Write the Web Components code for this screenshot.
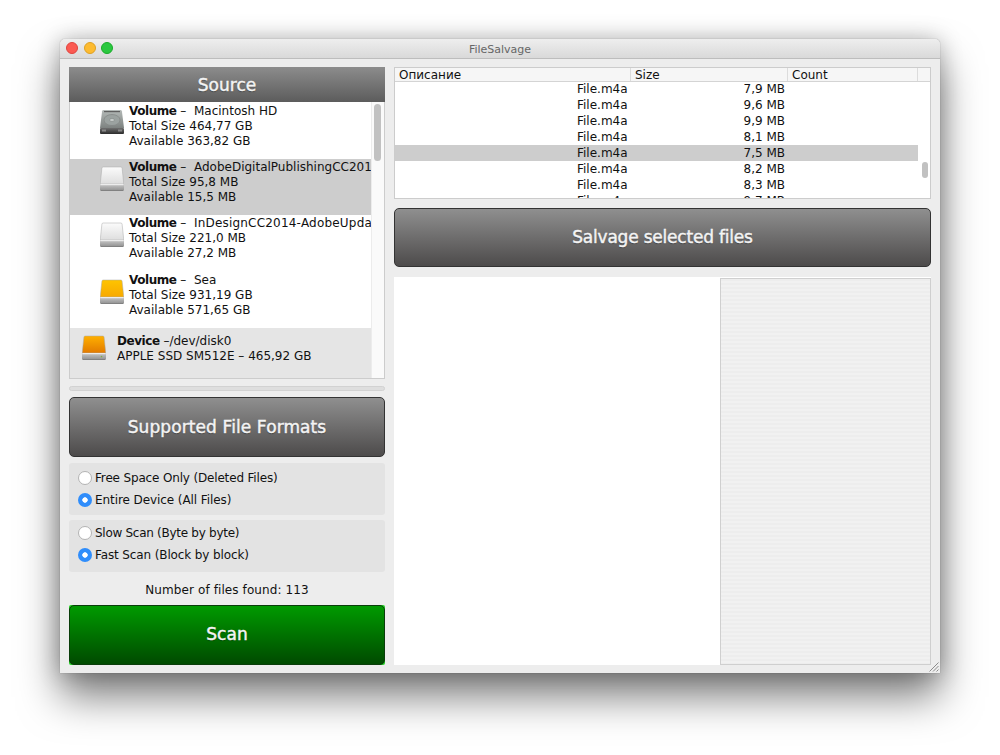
<!DOCTYPE html>
<html>
<head>
<meta charset="utf-8">
<title>FileSalvage</title>
<style>
  html, body { margin: 0; padding: 0; background: #ffffff; }
  body { font-family: "DejaVu Sans", "Liberation Sans", sans-serif; font-size: 12px; color: #111; }
  .stage { width: 1000px; height: 755px; box-sizing: border-box; padding: 39px 60px 0; overflow: hidden; }
  .left { display: flex; flex-direction: column; min-width: 0; }
  .right { display: flex; flex-direction: column; min-width: 0; }
  .found { height: 33px; box-sizing: border-box; padding-top: 3px; display: flex; align-items: center; justify-content: center; font-size: 12px; letter-spacing: 0.1px; }
</style>
</head>
<body>
<div class="stage">
  <fs-window title="FileSalvage">
    <div class="left">
      <fs-button variant="header">Source</fs-button>
      <fs-source-list>
        <fs-volume drive="internal" style="--text-top:1px" name="Macintosh HD" total="464,77 GB" free="363,82 GB"></fs-volume>
        <fs-volume drive="external" selected name="AdobeDigitalPublishingCC2014" total="95,8 MB" free="15,5 MB"></fs-volume>
        <fs-volume drive="external" style="--name-spacing:0.2px" name="InDesignCC2014-AdobeUpdate" total="221,0 MB" free="27,2 MB"></fs-volume>
        <fs-volume drive="amber" name="Sea" total="931,19 GB" free="571,65 GB"></fs-volume>
        <fs-device path="/dev/disk0" model="APPLE SSD SM512E" size="465,92 GB"></fs-device>
      </fs-source-list>
      <fs-splitter></fs-splitter>
      <fs-button style="height:59.5px;letter-spacing:0.1px">Supported File Formats</fs-button>
      <fs-radio-group style="margin-top:6.5px;padding-top:4px">
        <fs-radio style="letter-spacing:-0.16px">Free Space Only (Deleted Files)</fs-radio>
        <fs-radio checked style="letter-spacing:-0.08px">Entire Device (All Files)</fs-radio>
      </fs-radio-group>
      <fs-radio-group style="margin-top:5px;padding-top:2px">
        <fs-radio style="letter-spacing:-0.28px">Slow Scan (Byte by byte)</fs-radio>
        <fs-radio checked style="letter-spacing:-0.12px">Fast Scan (Block by block)</fs-radio>
      </fs-radio-group>
      <div class="found">Number of files found: 113</div>
      <fs-button variant="green" lift>Scan</fs-button>
    </div>
    <div class="right">
      <fs-file-table></fs-file-table>
      <fs-button lift style="margin-top:9px;height:59px;letter-spacing:-0.2px">Salvage selected files</fs-button>
      <fs-preview></fs-preview>
    </div>
  </fs-window>
</div>

<script>
// Window frame: title bar, two columns, resize grip
class FsWindow extends HTMLElement {
  constructor() {
    super();
    this.attachShadow({ mode: "open" });
  }
  connectedCallback() {
    this.shadowRoot.innerHTML = `
      <style>
        :host {
          display: flex;
          flex-direction: column;
          position: relative;
          width: 880px;
          height: 634px;
          background: #ededed;
          border-radius: 5px 5px 0 0;
          box-shadow: 0 24px 40px rgba(0, 0, 0, 0.5), 0 0 22px rgba(0, 0, 0, 0.25), 0 0 1px rgba(0, 0, 0, 0.45);
        }
        .bar {
          height: 20px;
          flex: none;
          box-sizing: border-box;
          padding-top: 2px;
          display: flex;
          align-items: center;
          justify-content: center;
          position: relative;
          border-bottom: 1px solid #bdbdbd;
          border-radius: 5px 5px 0 0;
          background: linear-gradient(#eeeeee, #d9d9d9);
          color: #666;
          font-size: 11px;
        }
        .lights { position: absolute; left: 6px; top: 3px; display: flex; gap: 5.5px; }
        .lights i { width: 12px; height: 12px; border-radius: 50%; display: block; box-sizing: border-box; }
        .r { background: #fb5a52; border: 1px solid #e0443e; }
        .y { background: #fdbb30; border: 1px solid #dea123; }
        .g { background: #2bc840; border: 1px solid #1aab29; }
        .body {
          flex: 1;
          display: grid;
          grid-template-columns: 316px 537px;
          gap: 9px;
          padding: 8px 9px 8px;
          min-height: 0;
        }
        .grip { position: absolute; right: 1px; bottom: 1px; }
      </style>
      <div class="bar">
        <div class="lights"><i class="r"></i><i class="y"></i><i class="g"></i></div>
        <span>${this.getAttribute("title")}</span>
      </div>
      <div class="body"><slot></slot></div>
      <svg class="grip" width="10" height="10" viewBox="0 0 10 10" fill="none" stroke="#8c8c8c" stroke-width="1">
        <path d="M0.5 9.5 9.5 0.5M4 9.5 9.5 4M7.5 9.5 9.5 7.5"/>
      </svg>
    `;
  }
}

// Gradient buttons: default grey, "header" (Source), "green" (Scan)
class FsButton extends HTMLElement {
  constructor() {
    super();
    this.attachShadow({ mode: "open" });
  }
  connectedCallback() {
    this.shadowRoot.innerHTML = `
      <style>
        :host {
          display: block;
          flex: none;
          height: 60px;
          color: #f4f4f4;
          font-size: 17px;
          text-shadow: 0 1px 1px rgba(0, 0, 0, 0.35);
          -webkit-text-stroke: 0.45px #f4f4f4;
        }
        .face {
          display: flex;
          align-items: center;
          justify-content: center;
          box-sizing: border-box;
          height: 100%;
          border: 1px solid #333;
          border-radius: 5px;
          background: linear-gradient(#8f8f8f, #4d4b4b);
        }
        :host([lift]) .face { padding-bottom: 2px; }
        :host([variant="header"]) { height: 35px; }
        :host([variant="header"]) .face {
          border: 0;
          border-radius: 0;
          background: linear-gradient(#8c8c8c, #5c5c5c);
        }
        :host([variant="green"]) { background: #25d025; border-radius: 2px; }
        :host([variant="green"]) .face {
          border-color: #0a3d0a;
          background: linear-gradient(#009a00, #004a00);
        }
      </style>
      <div class="face"><slot></slot></div>
    `;
  }
}

// Drive icons, drawn per kind
class FsDriveIcon extends HTMLElement {
  constructor() {
    super();
    this.attachShadow({ mode: "open" });
  }
  connectedCallback() {
    const kind = this.getAttribute("kind") || "external";
    const faces = {
      external: ["#fbfbfb", "#dedede"],
      amber: ["#ffc400", "#f7a900"],
      device: ["#ffb000", "#e27a00"],
    };
    let art;
    if (kind === "internal") {
      art = `
        <defs>
          <linearGradient id="top" x1="0" y1="0" x2="0" y2="1"><stop offset="0" stop-color="#b4bab8"/><stop offset="1" stop-color="#7d8280"/></linearGradient>
          <linearGradient id="front" x1="0" y1="0" x2="0" y2="1"><stop offset="0" stop-color="#6e6e6e"/><stop offset="1" stop-color="#2c2c2c"/></linearGradient>
        </defs>
        <path d="M3.5 1h17q1.2 0 1.4 1.2L24 19H0L2.1 2.2Q2.3 1 3.5 1z" fill="url(#top)"/>
        <rect x="4" y="2" width="16" height="1.2" fill="#5f5f5f"/>
        <ellipse cx="12" cy="11" rx="8" ry="5.5" fill="#9ba2a0" stroke="#7d8280" stroke-width=".6"/>
        <ellipse cx="12" cy="11" rx="2.4" ry="1.6" fill="#c4c9c7" stroke="#7d8280" stroke-width=".5"/>
        <rect x="0" y="19" width="24" height="6" rx="1" fill="url(#front)"/>
        <rect x="2" y="20.5" width="4" height="2" fill="#888"/>
        <rect x="18" y="20.5" width="4" height="2" fill="#888"/>
      `;
    } else {
      const f = faces[kind] || faces.external;
      art = `
        <defs>
          <linearGradient id="top" x1="0" y1="0" x2="0" y2="1"><stop offset="0" stop-color="${f[0]}"/><stop offset="1" stop-color="${f[1]}"/></linearGradient>
          <linearGradient id="base" x1="0" y1="0" x2="0" y2="1"><stop offset="0" stop-color="#c9c9c9"/><stop offset="1" stop-color="#8e8e8e"/></linearGradient>
        </defs>
        <path d="M3.2 1h17.6q1.2 0 1.3 1.2L23.8 18H.2L1.9 2.2Q2 1 3.2 1z" fill="url(#top)" stroke="#a8a8a8" stroke-width=".5"/>
        <rect x="0" y="18" width="24" height="7" rx="1.2" fill="url(#base)"/>
        <rect x="0.5" y="18" width="23" height="1.2" fill="#ececec"/>
        <rect x="1" y="24" width="22" height=".8" fill="#7d7d7d"/>
        ${kind === "device" ? '<circle cx="19.5" cy="21.6" r=".8" fill="#7fae44"/>' : ""}
      `;
    }
    this.shadowRoot.innerHTML = `
      <style>:host { display: block; flex: none; width: 24px; height: 26px; } svg { display: block; }</style>
      <svg width="24" height="26" viewBox="0 0 24 26">${art}</svg>
    `;
  }
}

// One mounted volume in the source list
class FsVolume extends HTMLElement {
  constructor() {
    super();
    this.attachShadow({ mode: "open" });
  }
  connectedCallback() {
    const a = (n) => this.getAttribute(n);
    this.shadowRoot.innerHTML = `
      <style>
        :host {
          display: flex;
          flex: none;
          gap: 5px;
          box-sizing: border-box;
          height: 56.5px;
          padding: 1px 0 0 30px;
          white-space: nowrap;
          overflow: hidden;
          line-height: 15px;
          font-size: 12px;
        }
        :host([selected]) { background: #cdcdcd; }
        fs-drive-icon { margin-top: 6px; }
        .text { padding-top: var(--text-top, 0); }
        .name { letter-spacing: var(--name-spacing, 0); }
        b { font-weight: 700; letter-spacing: -0.45px; }
      </style>
      <fs-drive-icon kind="${a("drive")}"></fs-drive-icon>
      <div class="text">
        <div><b>Volume</b> &#8211;&nbsp; <span class="name">${a("name")}</span></div>
        <div>Total Size ${a("total")}</div>
        <div>Available ${a("free")}</div>
      </div>
    `;
  }
}

class FsDevice extends HTMLElement {
  constructor() {
    super();
    this.attachShadow({ mode: "open" });
  }
  connectedCallback() {
    const a = (n) => this.getAttribute(n);
    this.shadowRoot.innerHTML = `
      <style>
        :host {
          display: flex;
          flex: none;
          gap: 11px;
          box-sizing: border-box;
          height: 50px;
          padding: 6px 0 0 12px;
          background: #e5e5e5;
          white-space: nowrap;
          overflow: hidden;
          line-height: 15px;
          font-size: 12px;
        }
        fs-drive-icon { margin-top: 1px; }
        b { font-weight: 700; letter-spacing: -0.45px; }
      </style>
      <fs-drive-icon kind="device"></fs-drive-icon>
      <div>
        <div><b>Device</b> &#8211;${a("path")}</div>
        <div>${a("model")} &#8211; ${a("size")}</div>
      </div>
    `;
  }
}

class FsSourceList extends HTMLElement {
  constructor() {
    super();
    this.attachShadow({ mode: "open" });
  }
  connectedCallback() {
    this.shadowRoot.innerHTML = `
      <style>
        :host {
          display: flex;
          flex: none;
          height: 277px;
          box-sizing: border-box;
          border: 1px solid #cccccc;
          border-top: 0;
          background: #fff;
        }
        .rows { flex: 1; min-width: 0; display: flex; flex-direction: column; overflow: hidden; }
        .track { flex: none; width: 13px; background: #fafafa; border-left: 1px solid #ececec; box-sizing: border-box; padding: 2px 2px 0 2px; }
        .thumb { height: 57px; width: 7px; border-radius: 4px; background: #c1c1c1; }
      </style>
      <div class="rows"><slot></slot></div>
      <div class="track"><div class="thumb"></div></div>
    `;
  }
}

class FsSplitter extends HTMLElement {
  constructor() {
    super();
    this.attachShadow({ mode: "open" });
  }
  connectedCallback() {
    this.shadowRoot.innerHTML = `
      <style>
        :host {
          display: block;
          flex: none;
          height: 5px;
          margin: 7px 0 6px;
          box-sizing: border-box;
          border: 1px solid #d2d2d2;
          border-radius: 3px;
          background: #dedede;
        }
      </style>
    `;
  }
}

class FsRadioGroup extends HTMLElement {
  constructor() {
    super();
    this.attachShadow({ mode: "open" });
  }
  connectedCallback() {
    this.shadowRoot.innerHTML = `
      <style>
        :host {
          display: flex;
          flex: none;
          flex-direction: column;
          box-sizing: border-box;
          height: 52px;
          padding-left: 9px;
          background: #e3e3e3;
          border-radius: 3px;
        }
      </style>
      <slot></slot>
    `;
  }
}

class FsRadio extends HTMLElement {
  constructor() {
    super();
    this.attachShadow({ mode: "open" });
  }
  connectedCallback() {
    this.shadowRoot.innerHTML = `
      <style>
        :host {
          display: flex;
          align-items: center;
          gap: 3px;
          height: 22px;
          font-size: 12px;
          white-space: nowrap;
        }
        i {
          display: block;
          width: 14px;
          height: 14px;
          box-sizing: border-box;
          border-radius: 50%;
          background: #fff;
          border: 1px solid #b3b3b3;
        }
        :host([checked]) i {
          border: 0;
          background: radial-gradient(circle, #fff 0 2.4px, #2f8dfb 3px);
        }
      </style>
      <i></i><span><slot></slot></span>
    `;
  }
}

// Results table, scrolled part way down
class FsFileTable extends HTMLElement {
  constructor() {
    super();
    this.attachShadow({ mode: "open" });
  }
  connectedCallback() {
    const sizes = ["7,9", "9,6", "9,9", "8,1", "7,5", "8,2", "8,3", "9,7"];
    const rows = sizes
      .map((s, i) => `<div class="row${i === 4 ? " sel" : ""}"><span class="name">File.m4a</span><span class="size">${s} MB</span></div>`)
      .join("");
    this.shadowRoot.innerHTML = `
      <style>
        :host {
          display: flex;
          flex-direction: column;
          flex: none;
          height: 132px;
          box-sizing: border-box;
          border: 1px solid #cccccc;
          background: #fff;
          font-size: 12px;
          overflow: hidden;
          position: relative;
        }
        .head {
          flex: none;
          height: 14px;
          box-sizing: border-box;
          display: grid;
          grid-template-columns: 236px 157px 130px 1fr;
          background: #f6f6f6;
          border-bottom: 1px solid #d4d4d4;
          line-height: 15px;
        }
        .head span { padding-left: 4px; border-right: 1px solid #dcdcdc; overflow: hidden; }
        .head span:last-child { border-right: 0; }
        .rows { flex: 1; min-height: 0; overflow: hidden; margin: -1px 12px 0 0; }
        .row { position: relative; height: 16px; line-height: 16px; }
        .row.sel { background: #cdcdcd; }
        .name { position: absolute; left: 182px; }
        .size { position: absolute; right: 133px; }
        .thumb { position: absolute; right: 2px; top: 94px; width: 6px; height: 16px; border-radius: 3px; background: #c1c1c1; }
      </style>
      <div class="head"><span>Описание</span><span>Size</span><span>Count</span><span></span></div>
      <div class="rows">${rows}</div>
      <div class="thumb"></div>
    `;
  }
}

// Bottom area: white list and striped inspector
class FsPreview extends HTMLElement {
  constructor() {
    super();
    this.attachShadow({ mode: "open" });
  }
  connectedCallback() {
    this.shadowRoot.innerHTML = `
      <style>
        :host { display: grid; grid-template-columns: 326px 1fr; flex: 1; min-height: 0; margin-top: 10px; background: #fff; }
        .stripes {
          margin-top: 1px;
          box-sizing: border-box;
          border: 1px solid #cfcfcf;
          background: repeating-linear-gradient(#ededed 0 2px, #f1f1f1 2px 4px);
        }
      </style>
      <div></div>
      <div class="stripes"></div>
    `;
  }
}

customElements.define("fs-window", FsWindow);
customElements.define("fs-button", FsButton);
customElements.define("fs-drive-icon", FsDriveIcon);
customElements.define("fs-volume", FsVolume);
customElements.define("fs-device", FsDevice);
customElements.define("fs-source-list", FsSourceList);
customElements.define("fs-splitter", FsSplitter);
customElements.define("fs-radio-group", FsRadioGroup);
customElements.define("fs-radio", FsRadio);
customElements.define("fs-file-table", FsFileTable);
customElements.define("fs-preview", FsPreview);
</script>
</body>
</html>
